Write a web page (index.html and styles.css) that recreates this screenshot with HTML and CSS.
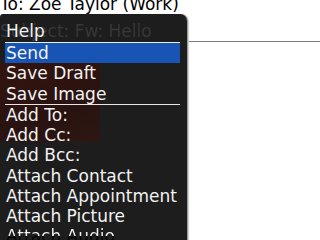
FILE: index.html
```html
<!DOCTYPE html>
<html>
<head>
<meta charset="utf-8">
<link rel="stylesheet" href="styles.css">
</head>
<body>
<div class="page">
  <div class="to">To: Zoe Taylor (Work)</div>
  <div class="subject"><span class="ghost">Subject: Fw: Hello</span></div>
  <div class="photo"></div>
</div>
<div class="menu">
  <ul class="items">
    <li class="item first">Help</li>
    <li class="item selected">Send</li>
    <li class="item">Save Draft</li>
    <li class="item sep">Save Image</li>
    <li class="item">Add To:</li>
    <li class="item">Add Cc:</li>
    <li class="item tall">Add Bcc:</li>
    <li class="item">Attach Contact</li>
    <li class="item">Attach Appointment</li>
    <li class="item">Attach Picture</li>
    <li class="item last">Attach Audio</li>
  </ul>
</div>
</body>
</html>
```

FILE: styles.css
```css
html, body {
  margin: 0;
  padding: 0;
  width: 320px;
  height: 240px;
  overflow: hidden;
  background: #ffffff;
  font-family: "DejaVu Sans", sans-serif;
}
.page {
  width: 320px;
}
.to {
  margin-top: -6px;
  height: 20px;
  font-size: 17px;
  line-height: 20px;
  color: #000;
  white-space: nowrap;
}
.subject {
  margin-top: 7px;
  height: 20px;
  font-size: 17px;
  line-height: 20px;
  border-bottom: 1px solid #7a7a7a;
  white-space: nowrap;
}
.ghost {
  position: relative;
  z-index: 1;
  color: rgba(255, 255, 255, 0.12);
}
.photo {
  position: relative;
  z-index: 1;
  margin-top: 21px;
  width: 100px;
  height: 79px;
  background: linear-gradient(160deg, rgba(75, 12, 0, 0.5), rgba(55, 6, 0, 0.45) 60%, rgba(65, 16, 5, 0.42));
}
.menu {
  position: absolute;
  left: 0;
  top: 14px;
  width: 187px;
  bottom: 0;
  background: #1d1d1d;
  border-radius: 3px 7px 0 0;
  box-shadow: 1px 0 0 #9a9a9a, 2px 0 1px #cfcfcf;
  overflow: hidden;
}
.items {
  position: relative;
  z-index: 2;
  list-style: none;
  margin: 0;
  padding: 7px 7px 0 5px;
}
.item {
  height: 20px;
  line-height: 20px;
  font-size: 17px;
  color: #f2f2f2;
  padding-left: 1px;
  white-space: nowrap;
}
.first {
  height: 21px;
}
.selected {
  background: #1754b4;
  border-top: 1px solid #e8eefa;
}
.sep {
  border-bottom: 1px solid #e6e6e6;
  height: 21px;
  line-height: 22px;
}
.tall {
  height: 21px;
  line-height: 21px;
}
.last {
  background: linear-gradient(to bottom, #f2f2f2 10px, #050505 10px);
  -webkit-background-clip: text;
  background-clip: text;
  color: transparent;
}
```
